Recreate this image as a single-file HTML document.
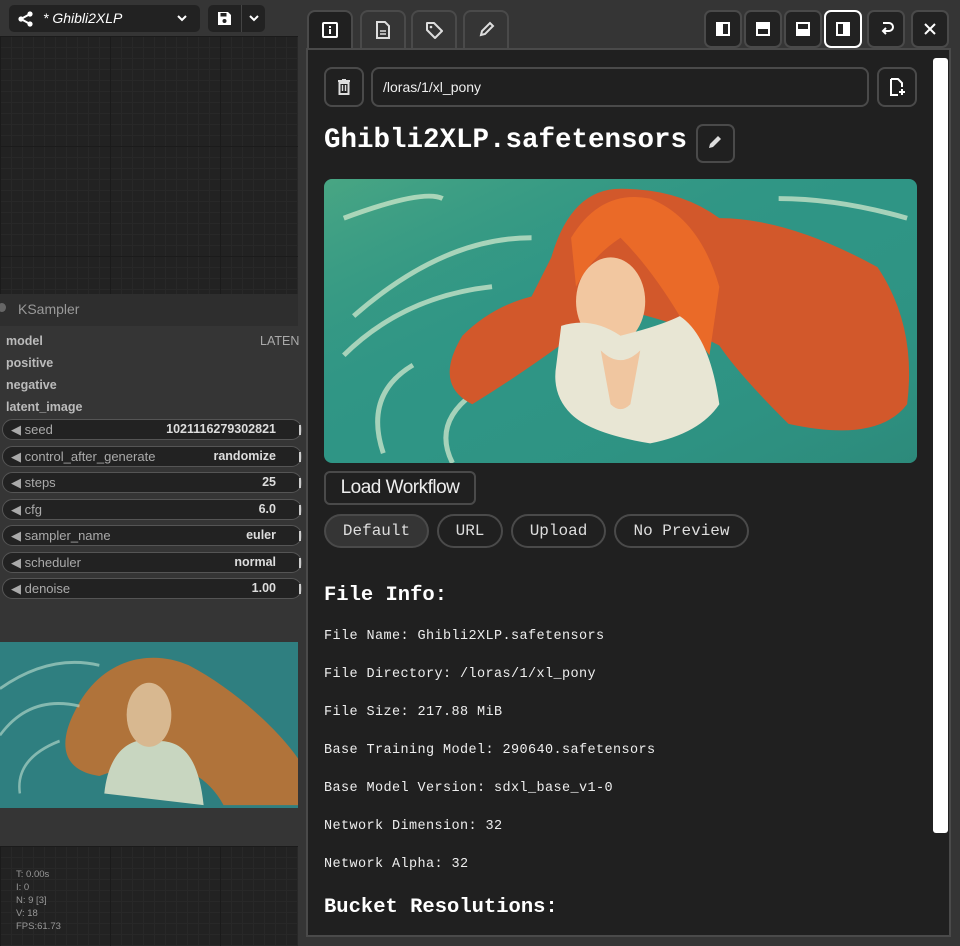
<!DOCTYPE html>
<html><head><meta charset="utf-8"><style>
*{box-sizing:border-box;margin:0;padding:0}
body{width:960px;height:946px;background:#353535;font-family:"Liberation Sans",sans-serif;overflow:hidden;position:relative}
.abs{position:absolute}
.grid{background-color:#222;background-image:linear-gradient(#1b1b1b 1px,transparent 1px),linear-gradient(90deg,#1b1b1b 1px,transparent 1px),linear-gradient(#282828 1px,transparent 1px),linear-gradient(90deg,#282828 1px,transparent 1px);background-size:110px 110px,110px 110px,11px 11px,11px 11px}
.mono{font-family:"Liberation Mono","DejaVu Sans Mono",monospace}
.w{position:absolute;left:2px;width:300px;height:21px;border:1px solid #555;border-radius:11px;background:#222;color:#aaa;font-size:13px;line-height:19px}
.w .l{position:absolute;left:8px}
.w .v{position:absolute;right:25px;color:#ddd;font-weight:bold;font-size:12.5px}
.w .e{position:absolute;right:0;top:5px;width:2px;height:10px;background:#ccc}
.lab{position:absolute;left:6px;color:#bbb;font-size:12.5px;font-weight:bold}
.tab{position:absolute;top:10px;height:40px;width:46px;border:2px solid #4a4a4a;border-bottom:none;border-radius:8px 8px 0 0;background:#353535}
.btn{position:absolute;top:10px;width:38px;height:38px;border:2px solid #4a4a4a;border-radius:7px;background:#222}
.pill{position:absolute;top:514px;height:34px;border:2px solid #4a4a4a;border-radius:17px;color:#ddd;font-size:16px;line-height:30px;text-align:center}
.info{position:absolute;left:324px;color:#eee;font-size:13.5px;letter-spacing:0.4px}
svg{display:block}
</style></head><body>
<!-- left canvas -->
<div class="abs" style="left:0;top:0;width:306px;height:36px;background:#353535"></div>
<div class="abs grid" style="left:0;top:36px;width:298px;height:258px"></div>
<div class="abs" style="left:9px;top:5px;width:191px;height:27px;background:#222;border-radius:5px"></div>
<svg class="abs" style="left:17px;top:10px" width="18" height="18" viewBox="0 0 18 18"><circle cx="4" cy="9" r="2.6" fill="#fff"/><circle cx="13" cy="4" r="2.6" fill="#fff"/><circle cx="13" cy="14" r="2.6" fill="#fff"/><path d="M4 9L13 4M4 9L13 14" stroke="#fff" stroke-width="2"/></svg>
<div class="abs" style="left:43px;top:10px;color:#fff;font-size:14px;font-style:italic">* Ghibli2XLP</div>
<svg class="abs" style="left:176px;top:13px" width="12" height="10"><path d="M2 3l4 4 4-4" stroke="#fff" stroke-width="2" fill="none"/></svg>
<div class="abs" style="left:208px;top:5px;width:57px;height:27px;background:#222;border-radius:5px"></div>
<div class="abs" style="left:241px;top:5px;width:1px;height:27px;background:#444"></div>
<svg class="abs" style="left:217px;top:11px" width="15" height="15" viewBox="0 0 15 15"><path d="M1 1h10l3 3v10H1z" fill="#fff"/><rect x="3.5" y="2" width="6" height="3.5" fill="#222"/><circle cx="7.5" cy="10" r="2" fill="#222"/></svg>
<svg class="abs" style="left:248px;top:13px" width="12" height="10"><path d="M2 3l4 4 4-4" stroke="#fff" stroke-width="2" fill="none"/></svg>

<div class="abs" style="left:0;top:294px;width:298px;height:32px;background:#2e2e2e"></div>
<div class="abs" style="left:-2px;top:303px;width:8px;height:9px;border-radius:50%;background:#666"></div>
<div class="abs" style="left:18px;top:301px;color:#999;font-size:14px">KSampler</div>
<div class="abs" style="left:0;top:326px;width:298px;height:520px;background:#353535"></div>
<div class="lab" style="top:334px">model</div>
<div class="abs" style="left:260px;top:334px;color:#aaa;font-size:12.5px">LATEN</div>
<div class="lab" style="top:356px">positive</div>
<div class="lab" style="top:378px">negative</div>
<div class="lab" style="top:400px">latent_image</div>
<div class="w" style="top:419px"><span class="l">◀ seed</span><span class="v">1021116279302821</span><span class="e"></span></div>
<div class="w" style="top:446px"><span class="l">◀ control_after_generate</span><span class="v">randomize</span><span class="e"></span></div>
<div class="w" style="top:472px"><span class="l">◀ steps</span><span class="v">25</span><span class="e"></span></div>
<div class="w" style="top:499px"><span class="l">◀ cfg</span><span class="v">6.0</span><span class="e"></span></div>
<div class="w" style="top:525px"><span class="l">◀ sampler_name</span><span class="v">euler</span><span class="e"></span></div>
<div class="w" style="top:552px"><span class="l">◀ scheduler</span><span class="v">normal</span><span class="e"></span></div>
<div class="w" style="top:578px"><span class="l">◀ denoise</span><span class="v">1.00</span><span class="e"></span></div>
<svg class="abs" style="left:0;top:642px" width="298" height="166" viewBox="0 0 600 285" preserveAspectRatio="none">
<rect width="600" height="285" fill="#2f7f80"/>
<path d="M150 120C200 30 300 10 380 40C470 80 560 150 600 200V280H450C400 200 300 200 200 230C120 220 120 170 150 120Z" fill="#b0733a"/>
<path d="M210 260C220 180 270 160 320 170C370 170 400 200 410 280Z" fill="#c8d6c0"/>
<ellipse cx="300" cy="125" rx="45" ry="55" fill="#d8b890"/>
<path d="M0 80Q100 20 200 40M0 160Q60 90 160 110M40 260Q30 200 120 170" stroke="#bfe0d0" stroke-width="5" fill="none" opacity=".6"/>
</svg>
<div class="abs grid" style="left:0;top:846px;width:298px;height:100px"></div>
<div class="abs" style="left:16px;top:868px;color:#999;font-size:9.5px;line-height:13px">T: 0.00s<br>I: 0<br>N: 9 [3]<br>V: 18<br>FPS:61.73</div>

<!-- right panel -->
<div class="tab" style="left:307px;background:#202020"></div>
<div class="tab" style="left:360px"></div>
<div class="tab" style="left:411px"></div>
<div class="tab" style="left:463px"></div>
<svg class="abs" style="left:322px;top:22px" width="16" height="16"><rect x="1" y="1" width="14" height="14" rx="1" fill="none" stroke="#fff" stroke-width="2"/><rect x="7" y="7" width="2" height="5" fill="#fff"/><rect x="7" y="4" width="2" height="2" fill="#fff"/></svg>
<svg class="abs" style="left:376px;top:21px" width="14" height="18"><path d="M1 1h8l4 4v12H1z" fill="none" stroke="#ddd" stroke-width="2"/><path d="M4 10h6M4 13h6" stroke="#ddd" stroke-width="1.6"/></svg>
<svg class="abs" style="left:425px;top:21px" width="18" height="18"><path d="M2 2h7l8 8-7 7-8-8z" fill="none" stroke="#ddd" stroke-width="2" stroke-linejoin="round"/><circle cx="6" cy="6" r="1.3" fill="#ddd"/></svg>
<svg class="abs" style="left:478px;top:21px" width="17" height="17"><path d="M3 14l1-4 8-8 3 3-8 8z" fill="none" stroke="#ddd" stroke-width="2"/></svg>

<div class="btn" style="left:704px"></div>
<div class="btn" style="left:744px"></div>
<div class="btn" style="left:784px"></div>
<div class="btn" style="left:824px;border-color:#fff"></div>
<div class="btn" style="left:867px"></div>
<div class="btn" style="left:911px"></div>
<svg class="abs" style="left:716px;top:22px" width="14" height="14"><rect x="1" y="1" width="12" height="12" fill="none" stroke="#fff" stroke-width="2"/><rect x="1" y="1" width="6" height="12" fill="#fff"/></svg>
<svg class="abs" style="left:756px;top:22px" width="14" height="14"><rect x="1" y="1" width="12" height="12" fill="none" stroke="#fff" stroke-width="2"/><rect x="1" y="1" width="12" height="6" fill="#fff"/></svg>
<svg class="abs" style="left:796px;top:22px" width="14" height="14"><rect x="1" y="1" width="12" height="12" fill="none" stroke="#fff" stroke-width="2"/><rect x="1" y="7" width="12" height="6" fill="#fff"/></svg>
<svg class="abs" style="left:836px;top:22px" width="14" height="14"><rect x="1" y="1" width="12" height="12" fill="none" stroke="#fff" stroke-width="2"/><rect x="7" y="1" width="6" height="12" fill="#fff"/></svg>
<svg class="abs" style="left:879px;top:20px" width="16" height="18"><path d="M4 3h6a4 4 0 010 8H4M7 8l-3 3 3 3" stroke="#fff" stroke-width="2" fill="none"/></svg>
<svg class="abs" style="left:923px;top:22px" width="14" height="14"><path d="M2 2l10 10M12 2L2 12" stroke="#fff" stroke-width="2"/></svg>

<div class="abs" style="left:306px;top:48px;width:645px;height:889px;background:#202020;border:2px solid #4a4a4a"></div>
<div class="abs" style="left:933px;top:58px;width:15px;height:775px;background:#fff;border-radius:3px"></div>

<div class="abs" style="left:324px;top:67px;width:40px;height:40px;border:2px solid #4a4a4a;border-radius:8px"></div>
<svg class="abs" style="left:337px;top:79px" width="14" height="16"><path d="M1 2h12M5 1h4" stroke="#ddd" stroke-width="2"/><rect x="2.5" y="4" width="9" height="11" fill="none" stroke="#ddd" stroke-width="2"/><path d="M5.5 6v6M8.5 6v6" stroke="#ddd" stroke-width="1.4"/></svg>
<div class="abs" style="left:371px;top:67px;width:498px;height:40px;border:2px solid #4a4a4a;border-radius:8px;color:#eee;font-size:14px;line-height:36px;padding-left:10px">/loras/1/xl_pony</div>
<div class="abs" style="left:877px;top:67px;width:40px;height:40px;border:2px solid #4a4a4a;border-radius:8px"></div>
<svg class="abs" style="left:889px;top:78px" width="18" height="18"><path d="M2 1h7l4 4v4M2 1v16h7" fill="none" stroke="#fff" stroke-width="2"/><path d="M13 11v6M10 14h6" stroke="#fff" stroke-width="2"/></svg>

<div class="abs mono" style="left:324px;top:125px;color:#fff;font-size:27.5px;font-weight:bold">Ghibli2XLP.safetensors</div>
<div class="abs" style="left:696px;top:124px;width:39px;height:39px;border:2px solid #4a4a4a;border-radius:7px"></div>
<svg class="abs" style="left:706px;top:134px" width="17" height="17"><path d="M3 14l1-4 8-8 3 3-8 8z" fill="#ddd"/></svg>

<svg class="abs" style="left:324px;top:179px;border-radius:8px" width="593" height="284" viewBox="0 0 600 290" preserveAspectRatio="none">
<rect width="600" height="290" fill="#2f9585"/>
<rect width="600" height="290" fill="url(#g)"/>
<defs><linearGradient id="g" x1="0" y1="0" x2="1" y2="1"><stop offset="0" stop-color="#6fbf80" stop-opacity=".4"/><stop offset=".5" stop-color="#2f9585" stop-opacity="0"/><stop offset="1" stop-color="#2a7f70" stop-opacity=".5"/></linearGradient></defs>
<path d="M20 40Q100 10 120 20M30 140Q120 60 210 60M20 180Q80 120 170 110M60 280Q40 220 90 190M130 290Q110 250 150 220M460 20Q520 20 590 40" stroke="#d8ecd0" stroke-width="5" fill="none" opacity=".7"/>
<path d="M230 80Q250 10 300 10Q360 10 400 40Q470 40 560 90Q600 150 590 230Q560 270 470 250Q420 200 400 170L360 150Q330 140 290 130Q230 180 150 230Q110 210 140 160Q170 130 210 120Z" fill="#d2582b"/>
<path d="M250 60Q280 10 330 20Q380 40 400 110L390 180L360 140Q330 90 300 60Q270 80 255 110Z" fill="#ea6a28"/>
<ellipse cx="290" cy="125" rx="35" ry="45" fill="#f2c7a0"/>
<path d="M240 150Q270 140 300 160Q340 150 360 140Q390 160 400 230Q380 260 330 270Q270 260 250 240Q230 220 235 190Z" fill="#e8e6d4"/>
<path d="M280 175Q300 195 320 175L310 230Q300 240 290 230Z" fill="#f0c6a0"/>
</svg>

<div class="abs" style="left:324px;top:471px;width:152px;height:34px;border:2px solid #4a4a4a;border-radius:6px;color:#eee;font-size:19px;line-height:30px;text-align:center;letter-spacing:-0.5px">Load Workflow</div>
<div class="pill mono" style="left:324px;width:105px;background:#353535">Default</div>
<div class="pill mono" style="left:437px;width:66px">URL</div>
<div class="pill mono" style="left:511px;width:95px">Upload</div>
<div class="pill mono" style="left:614px;width:135px">No Preview</div>

<div class="abs mono" style="left:324px;top:584px;color:#fff;font-size:20.5px;font-weight:bold">File Info:</div>
<div class="info mono" style="top:629px">File Name: Ghibli2XLP.safetensors</div>
<div class="info mono" style="top:667px">File Directory: /loras/1/xl_pony</div>
<div class="info mono" style="top:705px">File Size: 217.88 MiB</div>
<div class="info mono" style="top:743px">Base Training Model: 290640.safetensors</div>
<div class="info mono" style="top:781px">Base Model Version: sdxl_base_v1-0</div>
<div class="info mono" style="top:819px">Network Dimension: 32</div>
<div class="info mono" style="top:857px">Network Alpha: 32</div>
<div class="abs mono" style="left:324px;top:896px;color:#fff;font-size:20.5px;font-weight:bold">Bucket Resolutions:</div>
</body></html>
